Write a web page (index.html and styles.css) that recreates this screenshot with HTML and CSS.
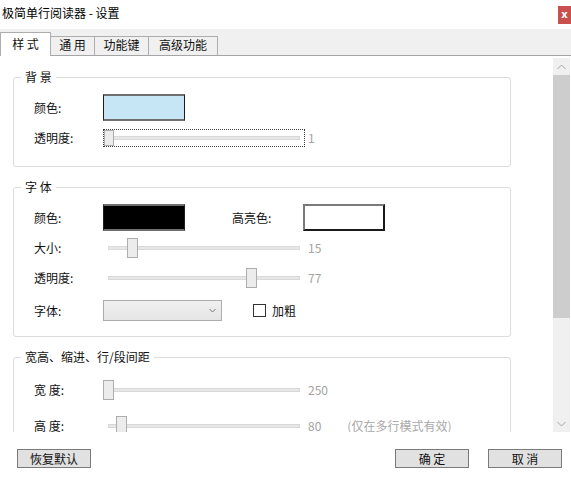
FILE: index.html
```html
<!DOCTYPE html>
<html lang="zh-CN">
<head>
<meta charset="utf-8">
<title>极简单行阅读器 - 设置</title>
<link rel="stylesheet" href="styles.css">
</head>
<body>
<div class="window">
  <div class="titlebar">
    <span class="title">极简单行阅读器 - 设置</span>
    <span class="close">x</span>
  </div>
  <div class="tabs">
    <div class="tab active t1">样 式</div>
    <div class="tab t2">通 用</div>
    <div class="tab t3">功能键</div>
    <div class="tab t4">高级功能</div>
  </div>
  <div class="main">
    <div class="pane">
      <fieldset class="group g1">
        <legend>背 景</legend>
        <div class="body">
          <div class="row h27">
            <span class="label">颜色:</span>
            <span class="swatch blue"></span>
          </div>
          <div class="row h18 mt8">
            <span class="label">透明度:</span>
            <div class="slider focused">
              <div class="track"></div>
              <div class="thumb" style="left:0px"></div>
            </div>
            <span class="val">1</span>
          </div>
        </div>
      </fieldset>

      <fieldset class="group g2">
        <legend>字 体</legend>
        <div class="body">
          <div class="row h27">
            <span class="label">颜色:</span>
            <span class="swatch black"></span>
            <span class="label label2">高亮色:</span>
            <span class="swatch white"></span>
          </div>
          <div class="row h20 mt7">
            <span class="label">大小:</span>
            <div class="slider">
              <div class="track"></div>
              <div class="thumb" style="left:24px"></div>
            </div>
            <span class="val">15</span>
          </div>
          <div class="row h20 mt10">
            <span class="label">透明度:</span>
            <div class="slider">
              <div class="track"></div>
              <div class="thumb" style="left:143px"></div>
            </div>
            <span class="val">77</span>
          </div>
          <div class="row h21 mt12">
            <span class="label">字体:</span>
            <div class="combo">
              <svg width="7" height="5" viewBox="0 0 7 5"><path d="M0.5 1 L3.5 4 L6.5 1" fill="none" stroke="#777" stroke-width="1"/></svg>
            </div>
            <span class="checkbox"></span>
            <span class="cblabel">加粗</span>
          </div>
        </div>
      </fieldset>

      <fieldset class="group g3">
        <legend>宽高、缩进、行/段间距</legend>
        <div class="body">
          <div class="row h20">
            <span class="label">宽 度:</span>
            <div class="slider">
              <div class="track"></div>
              <div class="thumb" style="left:0px"></div>
            </div>
            <span class="val">250</span>
          </div>
          <div class="row h20 mt16">
            <span class="label">高 度:</span>
            <div class="slider">
              <div class="track"></div>
              <div class="thumb" style="left:13px"></div>
            </div>
            <span class="val">80</span>
            <span class="note">(仅在多行模式有效)</span>
          </div>
        </div>
      </fieldset>
    </div>
    <div class="scrollbar">
      <div class="sb-btn">
        <svg width="9" height="6" viewBox="0 0 9 6"><path d="M0.5 5 L4.5 1 L8.5 5" fill="none" stroke="#a6a6a6" stroke-width="1"/></svg>
      </div>
      <div class="sb-thumb"></div>
      <div class="sb-track"></div>
      <div class="sb-btn">
        <svg width="9" height="6" viewBox="0 0 9 6"><path d="M0.5 1 L4.5 5 L8.5 1" fill="none" stroke="#a6a6a6" stroke-width="1"/></svg>
      </div>
    </div>
  </div>
  <div class="footer">
    <div class="btn">恢复默认</div>
    <div class="btn ok">确 定</div>
    <div class="btn cancel">取 消</div>
  </div>
</div>
</body>
</html>
```

FILE: styles.css
```css
html, body {
  margin: 0;
  padding: 0;
  background: #ffffff;
}

body {
  font-family: "Noto Sans CJK SC", "Noto Sans", sans-serif;
  font-size: 12px;
  line-height: 16px;
  color: #111111;
}

.window {
  width: 571px;
  height: 482px;
  overflow: hidden;
  display: flex;
  flex-direction: column;
  background: #ffffff;
}

/* title bar */
.titlebar {
  flex: none;
  height: 29px;
  display: flex;
  justify-content: space-between;
  align-items: flex-start;
}

.title {
  margin-top: 5px;
  padding-left: 2px;
  color: #000;
}

.close {
  width: 13px;
  height: 18px;
  margin-top: 6px;
  background: #c9504f;
  color: #ffffff;
  font-family: "DejaVu Sans", sans-serif;
  font-weight: bold;
  font-size: 10px;
  line-height: 17px;
  text-align: center;
}

/* tabs */
.tabs {
  flex: none;
  height: 27px;
  box-sizing: border-box;
  background: #f0f0f0;
  border-bottom: 1px solid #a5a5a5;
  display: flex;
  align-items: flex-end;
}

.tab {
  height: 19px;
  box-sizing: border-box;
  border: 1px solid #adadad;
  border-bottom: 0;
  margin-left: -1px;
  text-align: center;
  line-height: 16px;
  background: #f0f0f0;
  color: #111;
}

.tab.active {
  height: 24px;
  margin-left: 0;
  margin-bottom: -1px;
  padding-top: 3px;
  background: #ffffff;
  position: relative;
  z-index: 1;
}

.t1 { width: 51px; }
.t2 { width: 45px; }
.t3 { width: 55px; }
.t4 { width: 70px; }

/* main area */
.main {
  flex: none;
  height: 376px;
  display: flex;
}

.pane {
  flex: 1;
  overflow: hidden;
  padding-left: 13px;
}

.group {
  width: 498px;
  box-sizing: border-box;
  margin: 12px 0 0 0;
  padding: 0;
  border: 1px solid #dcdcdc;
  border-radius: 3px;
  min-width: 0;
}

.g1 { margin-top: 13px; }

.group legend {
  margin-left: 7px;
  padding: 0 4px;
  line-height: 16px;
  color: #111;
}

.body {
  padding: 9px 0 15px 20px;
}

.g1 .body { padding-bottom: 19px; }
.g3 .body { padding-top: 15px; }

.row {
  display: flex;
  align-items: center;
}

.h18 { height: 18px; }
.h20 { height: 20px; }
.h21 { height: 21px; }
.h27 { height: 27px; }
.mt7 { margin-top: 7px; }
.mt8 { margin-top: 8px; }
.mt10 { margin-top: 10px; }
.mt12 { margin-top: 12px; }
.mt16 { margin-top: 16px; }

.label {
  flex: none;
  width: 69px;
  color: #111;
}

.label2 {
  width: 71px;
  margin-left: 47px;
}

.swatch {
  flex: none;
  width: 82px;
  height: 27px;
  box-sizing: border-box;
  border-style: solid;
  border-width: 2px 1px;
  border-color: #6f6f6f #1e1e1e;
}

.swatch.blue { background: #c6e6f6; }
.swatch.black { background: #000000; }
.swatch.white {
  background: #ffffff;
  border-width: 2px;
  border-color: #7a7a7a #1a1a1a #1a1a1a #7a7a7a;
}

/* slider */
.slider {
  flex: none;
  position: relative;
  width: 202px;
  height: 20px;
  box-sizing: border-box;
}

.slider .track {
  position: absolute;
  left: 5px;
  right: 5px;
  top: 8px;
  height: 4px;
  box-sizing: border-box;
  background: #e7e7e7;
  border: 1px solid #d9d9d9;
}

.slider .thumb {
  position: absolute;
  top: 0;
  width: 11px;
  height: 20px;
  box-sizing: border-box;
  background: #ececec;
  border: 1px solid #adadad;
}

.slider.focused {
  height: 18px;
  border: 1px dotted #3c3c3c;
}

.slider.focused .track {
  left: 9px;
  right: 4px;
  top: 6px;
}

.slider.focused .thumb {
  width: 10px;
  height: 16px;
}

.val {
  margin-left: 3px;
  color: #a3a3a3;
}

.note {
  margin-left: 26px;
  color: #a8a8a8;
}

/* combo + checkbox */
.combo {
  flex: none;
  width: 119px;
  height: 21px;
  box-sizing: border-box;
  border: 1px solid #acacac;
  background: linear-gradient(#f0f0f0, #e5e5e5);
  display: flex;
  align-items: center;
  justify-content: flex-end;
  padding-right: 5px;
}

.checkbox {
  flex: none;
  width: 13px;
  height: 13px;
  box-sizing: border-box;
  margin-left: 31px;
  border: 1px solid #333333;
  background: #ffffff;
}

.cblabel {
  margin-left: 6px;
  color: #111;
}

/* scrollbar */
.scrollbar {
  flex: none;
  width: 17px;
  margin: 2px 1px 0 0;
  background: #f0f0f0;
  display: flex;
  flex-direction: column;
}

.sb-btn {
  flex: none;
  height: 17px;
  display: flex;
  align-items: center;
  justify-content: center;
}

.sb-thumb {
  flex: none;
  height: 243px;
  background: #cdcdcd;
}

.sb-track {
  flex: 1;
}

/* footer */
.footer {
  flex: 1;
  display: flex;
  align-items: flex-start;
  padding: 17px 9px 0 17px;
}

.btn {
  width: 74px;
  height: 19px;
  box-sizing: border-box;
  border: 1px solid #7a7a7a;
  background: #e1e1e1;
  text-align: center;
  line-height: 17px;
  color: #111;
}

.btn.ok { margin-left: auto; }
.btn.cancel { margin-left: 19px; }
```
